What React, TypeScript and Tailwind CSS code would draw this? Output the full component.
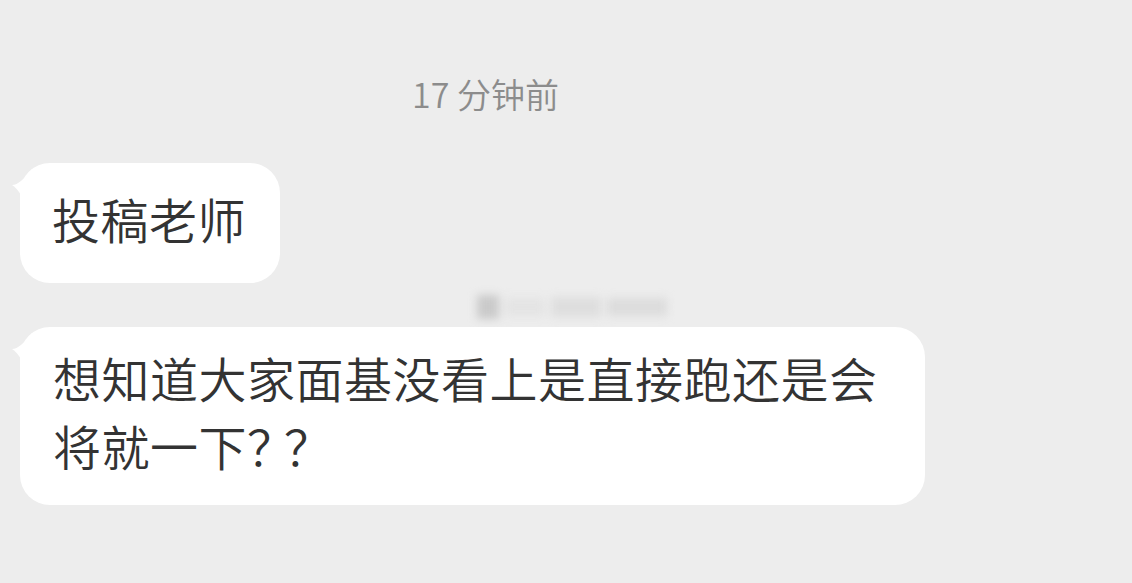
import React from "react";

const font = { fontFamily: '"Noto Sans CJK SC", "Noto Sans", sans-serif' };

const Tail: React.FC = () => (
  <svg
    className="absolute left-[-14px] top-[2px]"
    width="30"
    height="40"
    viewBox="0 0 30 40"
  >
    <path d="M6 20 C 12 20, 18 14, 26 4 L 30 4 L 30 40 L 18 40 C 16 30, 12 24, 6 20 Z" fill="#ffffff" />
  </svg>
);

const Bubble: React.FC<{ className: string; children: React.ReactNode }> = ({ className, children }) => (
  <div className={`relative bg-white rounded-[30px] text-[48px] leading-[68px] tracking-[0.5px] font-[350] text-[#333333] ${className}`}>
    <Tail />
    <div className="relative">{children}</div>
  </div>
);

export default function App() {
  return (
    <div className="w-[1132px] h-[583px] bg-[#ededed] overflow-hidden" style={font}>
      <div className="pl-[412px] pt-[74px] text-[34px] leading-[40px] font-[350] text-[#8c8c8c]">17 分钟前</div>

      <div className="pl-[20px] pt-[49px]">
        <Bubble className="w-[260px] h-[120px] pl-[32px] pt-[21px]">投稿老师</Bubble>
      </div>

      <div className="pl-[477px] pt-[3px] h-[44px] flex items-center">
        <div className="flex items-center gap-[6px] blur-[4px]">
          <div className="w-[22px] h-[24px] bg-[#cacaca]" />
          <div className="w-[40px] h-[18px] bg-[#e4e4e4]" />
          <div className="w-[50px] h-[20px] bg-[#dedede]" />
          <div className="w-[60px] h-[18px] bg-[#dcdcdc]" />
        </div>
      </div>

      <div className="pl-[20px]">
        <Bubble className="w-[905px] h-[178px] pl-[33px] pt-[16px]">
          想知道大家面基没看上是直接跑还是会
          <br />
          将就一下<span className="tracking-[-11px]">？？</span>
        </Bubble>
      </div>
    </div>
  );
}
